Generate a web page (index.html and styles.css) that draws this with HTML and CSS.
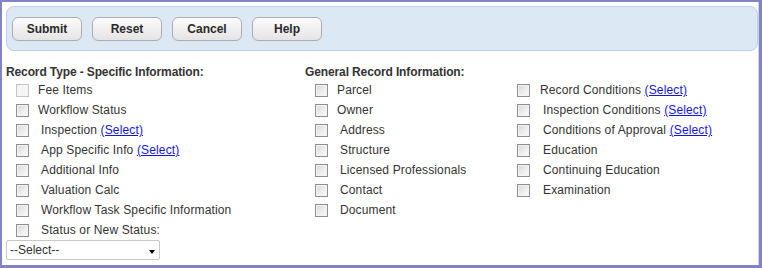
FILE: index.html
```html
<!DOCTYPE html>
<html lang="en">
  <head>
    <meta charset="UTF-8" />
    <title>Record Information</title>
    <link rel="stylesheet" href="styles.css">
  </head>
  <body>
    <div class="frame">
      <div class="toolbar">
        <button class="btn">Submit</button>
        <button class="btn">Reset</button>
        <button class="btn">Cancel</button>
        <button class="btn">Help</button>
      </div>

      <div class="sections">
        <div class="col col-type">
          <h3>Record Type - Specific Information:</h3>
          <ul class="opts">
            <li><input type="checkbox" disabled /><span>Fee Items</span></li>
            <li><input type="checkbox" /><span>Workflow Status</span></li>
            <li><input type="checkbox" /><span class="pad">Inspection <a href="#">(Select)</a></span></li>
            <li><input type="checkbox" /><span class="pad">App Specific Info <a href="#">(Select)</a></span></li>
            <li><input type="checkbox" /><span class="pad">Additional Info</span></li>
            <li><input type="checkbox" /><span class="pad">Valuation Calc</span></li>
            <li><input type="checkbox" /><span class="pad">Workflow Task Specific Information</span></li>
            <li><input type="checkbox" /><span class="pad">Status or New Status:</span></li>
          </ul>
          <div class="select-wrap">
            <select class="status">
              <option>--Select--</option>
            </select>
          </div>
        </div>

        <div class="col col-general">
          <h3>General Record Information:</h3>
          <ul class="opts">
            <li><input type="checkbox" /><span>Parcel</span></li>
            <li><input type="checkbox" /><span>Owner</span></li>
            <li><input type="checkbox" /><span class="pad">Address</span></li>
            <li><input type="checkbox" /><span class="pad">Structure</span></li>
            <li><input type="checkbox" /><span class="pad">Licensed Professionals</span></li>
            <li><input type="checkbox" /><span class="pad">Contact</span></li>
            <li><input type="checkbox" /><span class="pad">Document</span></li>
          </ul>
        </div>

        <div class="col col-cond">
          <ul class="opts">
            <li><input type="checkbox" /><span class="wide">Record Conditions <a href="#">(Select)</a></span></li>
            <li><input type="checkbox" /><span class="wide pad">Inspection Conditions <a href="#">(Select)</a></span></li>
            <li><input type="checkbox" /><span class="wide pad">Conditions of Approval <a href="#">(Select)</a></span></li>
            <li><input type="checkbox" /><span class="wide pad">Education</span></li>
            <li><input type="checkbox" /><span class="wide pad">Continuing Education</span></li>
            <li><input type="checkbox" /><span class="wide pad">Examination</span></li>
          </ul>
        </div>
      </div>
    </div>
  </body>
</html>
```

FILE: styles.css
```css
* {
  box-sizing: border-box;
}
body {
  margin: 0;
  font-family: "Liberation Sans", Arial, sans-serif;
  font-size: 12px;
  color: #333;
  background: white;
}
.frame {
  width: 762px;
  height: 268px;
  border-style: solid;
  border-color: #8282c6;
  border-width: 2px 3px 3px 2px;
  padding: 4px 0 0 4px;
  box-shadow: inset -1px 0 0 #d4d4de;
}
.toolbar {
  display: flex;
  gap: 10px;
  height: 45px;
  margin-right: 1px;
  padding: 10px 5px 9px;
  background: #dde8f5;
  border: 1px solid #b9d0ea;
  border-radius: 8px;
}
.btn {
  width: 70px;
  height: 24px;
  padding: 0;
  font-family: inherit;
  font-size: 12px;
  font-weight: bold;
  color: #2a2a2a;
  background: linear-gradient(#fbfbfb 0%, #f0f0f0 50%, #e4e4e4 100%);
  border: 1px solid #adadad;
  border-radius: 6px;
  cursor: pointer;
}
.sections {
  display: flex;
  margin-top: 13px;
}
.col-type {
  width: 299px;
}
.col-general {
  width: 202px;
}
.col-cond {
  padding-top: 16px;
}
h3 {
  margin: 0;
  font-size: 12px;
  line-height: 16px;
  font-weight: bold;
  letter-spacing: -0.12px;
  color: #333;
}
.opts {
  list-style: none;
  margin: 0;
  padding: 0;
}
.opts li {
  display: flex;
  align-items: center;
  height: 20px;
  line-height: 20px;
  white-space: nowrap;
  letter-spacing: 0.14px;
}
.opts input {
  appearance: none;
  -webkit-appearance: none;
  width: 13px;
  height: 13px;
  margin: 0 0 0 10px;
  border: 1px solid #8e8f8f;
  background: linear-gradient(135deg, #d6d6d6 0%, #eeeeee 55%, #fbfbfb 100%);
  box-shadow: inset 0 0 0 1px #f4f4f4;
}
.opts input:disabled {
  border-color: #c4c4c4;
  background: #f5f5f5;
  box-shadow: none;
}
.opts span {
  margin-left: 9px;
}
.opts span.wide {
  margin-left: 10px;
}
.opts span.pad {
  margin-left: 12px;
}
.opts span.wide.pad {
  margin-left: 13px;
}
a {
  color: #1414e6;
  text-decoration: underline;
}
.select-wrap {
  position: relative;
  width: 154px;
}
.status {
  appearance: none;
  -webkit-appearance: none;
  display: block;
  width: 154px;
  height: 20px;
  padding: 0 0 0 3px;
  font-family: inherit;
  font-size: 12px;
  color: #333;
  background: white;
  border: 1px solid #c9c9c9;
  border-radius: 2px;
}
.select-wrap::after {
  content: "";
  position: absolute;
  right: 5px;
  top: 10px;
  border-left: 3.5px solid transparent;
  border-right: 3.5px solid transparent;
  border-top: 4px solid #000;
}
```
